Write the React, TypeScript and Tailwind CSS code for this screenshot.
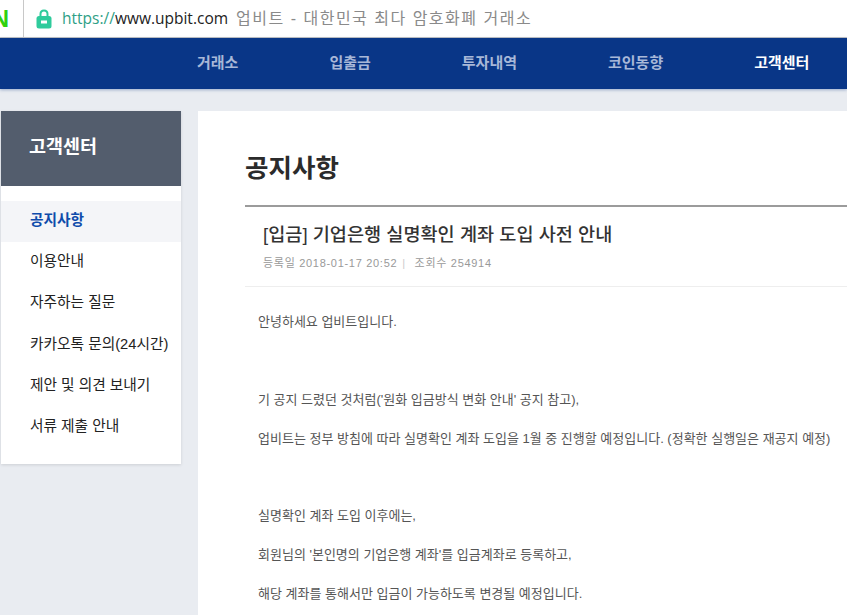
const kr = "font-['Liberation_Sans','Noto_Sans_CJK_KR',sans-serif]";

const navItems = ['거래소', '입출금', '투자내역', '코인동향', '고객센터'];
const sideItems = ['공지사항', '이용안내', '자주하는 질문', '카카오톡 문의(24시간)', '제안 및 의견 보내기', '서류 제출 안내'];
const lines = [
  '안녕하세요 업비트입니다.',
  '',
  "기 공지 드렸던 것처럼('원화 입금방식 변화 안내' 공지 참고),",
  '업비트는 정부 방침에 따라 실명확인 계좌 도입을 1월 중 진행할 예정입니다. (정확한 실행일은 재공지 예정)',
  '',
  '실명확인 계좌 도입 이후에는,',
  "회원님의 '본인명의 기업은행 계좌'를 입금계좌로 등록하고,",
  '해당 계좌를 통해서만 입금이 가능하도록 변경될 예정입니다.',
];

export default function App() {
  return (
    <div className={`${kr} w-[847px] h-[615px] overflow-hidden bg-[#e9ecf1]`}>
      <div className="h-[38px] bg-white border-b border-[#c4c4c4] flex items-center">
        <span className="w-[24px] shrink-0 h-full border-r border-[#c8c8c8] flex items-center justify-end pr-[14px] text-[24px] font-bold text-[#2fd10f]">N</span>
        <svg className="ml-[12px] w-[16px] h-[20px]" viewBox="0 0 16 20" fill="none">
          <path d="M4.5 9V5C4.5 2.8 6 1.5 8 1.5S11.5 2.8 11.5 5V9" stroke="#2fcb9c" strokeWidth="2" />
          <rect x="0.5" y="7" width="15" height="12.5" rx="2.5" fill="#2fcb9c" />
          <rect x="5" y="11.5" width="6" height="3" fill="#fff" />
        </svg>
        <span className="ml-[10px] text-[15.5px] text-[#2f9f86] font-['Open_Sans','Noto_Sans_CJK_KR',sans-serif]">https://<span className="text-[#222]">www.upbit.com</span></span>
        <span className="ml-[8px] text-[16px] tracking-[1.5px] text-[#8a8a8a]">업비트 - 대한민국 최다 암호화폐 거래소</span>
      </div>

      <nav className="h-[51px] bg-[#093687] shadow-[0_1px_3px_rgba(9,54,135,0.35)] flex items-center pl-[197px] gap-[91px]">
        {navItems.map((n, i) => (
          <span key={n} className={`text-[15px] font-bold ${i === 4 ? 'text-white' : 'text-[#a8b8d8]'}`}>{n}</span>
        ))}
      </nav>

      <div className="flex items-start pt-[22px] pl-[1px] gap-[17px]">
        <aside className="w-[180px] h-[353px] bg-white shadow-[0_1px_3px_rgba(0,0,0,0.12)]">
          <h2 className="h-[75px] bg-[#535d6d] pl-[28px] pb-[4px] flex items-center text-[18.5px] font-bold text-white">고객센터</h2>
          <ul className="pt-[15px]">
            {sideItems.map((s, i) => (
              <li key={s} className={`h-[41.2px] pl-[29px] pb-[3px] flex items-center text-[14.7px] whitespace-nowrap ${i === 0 ? 'bg-[#f4f5f8] font-bold text-[#0f4cab]' : 'text-[#222]'}`}>{s}</li>
            ))}
          </ul>
        </aside>

        <main className="flex-1 h-[520px] bg-white pl-[47px]">
          <h1 className="h-[94px] pt-[39px] text-[25.5px] leading-[36px] font-bold text-[#2b2b2b]">공지사항</h1>
          <div className="border-t-2 border-[#9b9b9b] border-b border-b-[#eeeeee] h-[82px] pl-[18px] pt-[15px]">
            <h3 className="text-[18.6px] leading-[26px] font-medium text-[#333]">[입금] 기업은행 실명확인 계좌 도입 사전 안내</h3>
            <p className="mt-[7px] text-[11px] leading-[16px] tracking-[0.7px] text-[#999]">
              등록일 2018-01-17 20:52<span className="mx-[5px] text-[#ccc]">|</span> 조회수 254914
            </p>
          </div>
          <div className="pt-[16px] pl-[13px] text-[13px] text-[#555]">
            {lines.map((t, i) => (
              <p key={i} className="h-[38.9px] leading-[38.9px] whitespace-nowrap">{t}</p>
            ))}
          </div>
        </main>
      </div>
    </div>
  );
}
